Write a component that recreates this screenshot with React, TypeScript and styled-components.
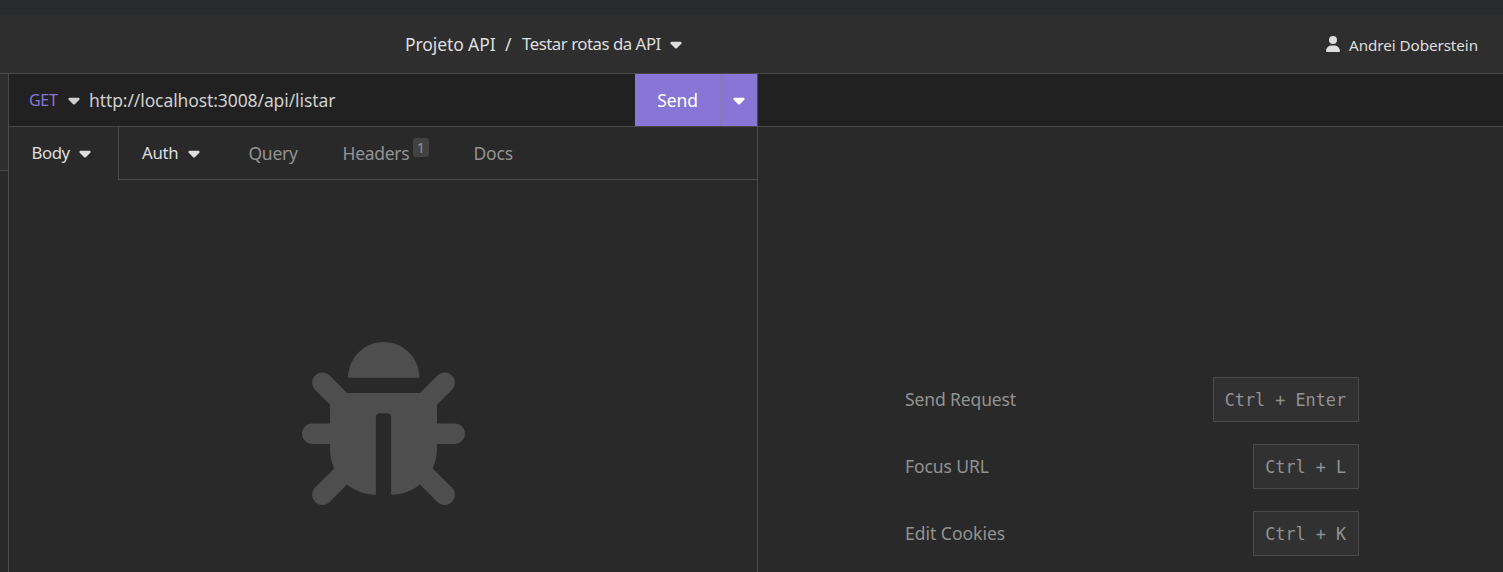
import React from "react";
import styled, { createGlobalStyle } from "styled-components";
import { FaBug } from "react-icons/fa";
import { FaCaretDown, FaUser } from "react-icons/fa6";

const line = "#4a4a4a";

const GlobalStyle = createGlobalStyle`
  * { box-sizing: border-box; }
  body {
    margin: 0;
    overflow: hidden;
    background: #292929;
    font-family: "Noto Sans", "Open Sans", sans-serif;
  }
`;

const Window = styled.div`
  width: 1503px;
  height: 572px;
  display: flex;
  flex-direction: column;
  color: #dedede;
`;

const TitleStrip = styled.div`
  flex: 0 0 15px;
  background: #2a2b2f;
`;

const Header = styled.header`
  flex: 0 0 59px;
  display: flex;
  align-items: center;
  padding: 0 25px 0 405px;
  background: #2e2e2e;
  border-bottom: 1px solid ${line};
`;

const Label = styled.span<{ $size?: number; $track?: number; $width?: number }>`
  display: inline-block;
  flex: none;
  width: ${(p) => (p.$width ? `${p.$width}px` : "auto")};
  font-size: ${(p) => p.$size ?? 17.5}px;
  letter-spacing: ${(p) => p.$track ?? -0.3}px;
  line-height: 24px;
  white-space: pre;
`;

const Caret = styled(FaCaretDown)`
  flex: none;
  width: 12px;
  height: 18px;
`;

const User = styled.div`
  display: flex;
  align-items: center;
  margin-left: auto;
  padding-top: 2px;
  gap: 9px;
`;

const UserIcon = styled(FaUser)`
  width: 14px;
  height: 16px;
  margin-bottom: 2px;
`;

const Workspace = styled.main`
  flex: 1;
  display: flex;
  min-height: 0;
`;

const Sidebar = styled.aside`
  flex: 0 0 9px;
  background: #2e2e2e;
  border-right: 1px solid ${line};
`;

const SidebarTop = styled.div`
  height: 97px;
  border-bottom: 1px solid ${line};
`;

const SidebarRest = styled.div`
  height: 401px;
  background: #292929;
`;

const RequestPane = styled.section`
  flex: 0 0 749px;
  display: flex;
  flex-direction: column;
  border-right: 1px solid ${line};
`;

const UrlBar = styled.div`
  flex: 0 0 53px;
  display: flex;
  align-items: center;
  padding-left: 20px;
  background: #212121;
  border-bottom: 1px solid ${line};
`;

const Method = styled.div`
  display: flex;
  align-items: center;
  width: 60px;
  color: #8776d5;

  svg { color: #cfcfcf; }
`;

const Url = styled.div`
  flex: 1;
  color: #cfcfcf;
`;

const SendButton = styled.button`
  align-self: stretch;
  width: 86px;
  padding: 0;
  border: 0;
  border-right: 1px solid #8479b5;
  background: #8776d5;
  color: #fff;
  font-family: inherit;
`;

const SendMenu = styled.button`
  align-self: stretch;
  display: flex;
  align-items: center;
  justify-content: center;
  width: 36px;
  padding: 0 1px 0 0;
  border: 0;
  background: #8776d5;
  color: #fff;
`;

const Tabs = styled.nav`
  flex: 0 0 53px;
  display: flex;
`;

const BodyTab = styled.div`
  display: flex;
  align-items: center;
  width: 110px;
  padding: 0 0 1px 22.5px;
  border-right: 1px solid ${line};
`;

const TabRow = styled.div`
  flex: 1;
  display: flex;
  align-items: center;
  padding-left: 23px;
  border-bottom: 1px solid ${line};
`;

const Tab = styled.div<{ $width: number; $muted?: boolean }>`
  display: flex;
  align-items: center;
  width: ${(p) => p.$width}px;
  color: ${(p) => (p.$muted ? "#929292" : "#dedede")};
`;

const Badge = styled.sup`
  width: 16px;
  height: 19px;
  margin: -11px 0 0;
  border-radius: 3px;
  background: #424242;
  font-size: 14.5px;
  line-height: 18px;
  text-align: center;
`;

const EmptyBody = styled.div`
  flex: 1;
  display: flex;
  justify-content: center;
  padding: 161.5px 0 0 1px;
  color: #4e4e4e;
`;

const ResponsePane = styled.section`
  flex: 1;
`;

const ResponseHeader = styled.div`
  height: 53px;
  background: #212121;
  border-bottom: 1px solid ${line};
`;

const Shortcuts = styled.div`
  display: flex;
  flex-direction: column;
  gap: 22px;
  padding: 250px 144px 0 147px;
`;

const Shortcut = styled.div`
  display: flex;
  align-items: center;
  justify-content: space-between;
  height: 45px;
  color: #929292;

  > span { margin-bottom: 2px; }
`;

const Keys = styled.kbd`
  height: 45px;
  padding: 1px 12px 0 11px;
  border: 1px solid ${line};
  background: #313131;
  font: 16.8px/43px "DejaVu Sans Mono", monospace;
`;

const shortcuts = [
  { name: "Send Request", keys: "Ctrl + Enter", track: -0.12 },
  { name: "Focus URL", keys: "Ctrl + L", track: -0.08 },
  { name: "Edit Cookies", keys: "Ctrl + K", track: 0 },
];

export default function App() {
  return (
    <Window>
      <GlobalStyle />
      <TitleStrip />
      <Header>
        <Label $width={100} $track={-0.1}>Projeto API</Label>
        <Label $width={17}>/</Label>
        <Label $width={148} $size={16.8} $track={-0.47}>Testar rotas da API</Label>
        <Caret />
        <User>
          <UserIcon />
          <Label $size={15.2} $track={-0.06}>Andrei Doberstein</Label>
        </User>
      </Header>
      <Workspace>
        <Sidebar>
          <SidebarTop />
          <SidebarRest />
        </Sidebar>
        <RequestPane>
          <UrlBar>
            <Method>
              <Label $width={39} $size={16}>GET</Label>
              <Caret />
            </Method>
            <Url>
              <Label $track={-0.1}>http://localhost:3008/api/listar</Label>
            </Url>
            <SendButton><Label $track={-0.1}>Send</Label></SendButton>
            <SendMenu><Caret /></SendMenu>
          </UrlBar>
          <Tabs>
            <BodyTab>
              <Label $width={47.5} $size={16.8} $track={-0.45}>Body</Label>
              <Caret />
            </BodyTab>
            <TabRow>
              <Tab $width={106.5}>
                <Label $width={46} $size={16.8}>Auth</Label>
                <Caret />
              </Tab>
              <Tab $width={94} $muted><Label>Query</Label></Tab>
              <Tab $width={131} $muted>
                <Label $width={70.5}>Headers</Label>
                <Badge>1</Badge>
              </Tab>
              <Tab $width={60} $muted><Label $track={-0.15}>Docs</Label></Tab>
            </TabRow>
          </Tabs>
          <EmptyBody><FaBug size={163} /></EmptyBody>
        </RequestPane>
        <ResponsePane>
          <ResponseHeader />
          <Shortcuts>
            {shortcuts.map((s) => (
              <Shortcut key={s.name}>
                <Label $track={s.track}>{s.name}</Label>
                <Keys>{s.keys}</Keys>
              </Shortcut>
            ))}
          </Shortcuts>
        </ResponsePane>
      </Workspace>
    </Window>
  );
}
